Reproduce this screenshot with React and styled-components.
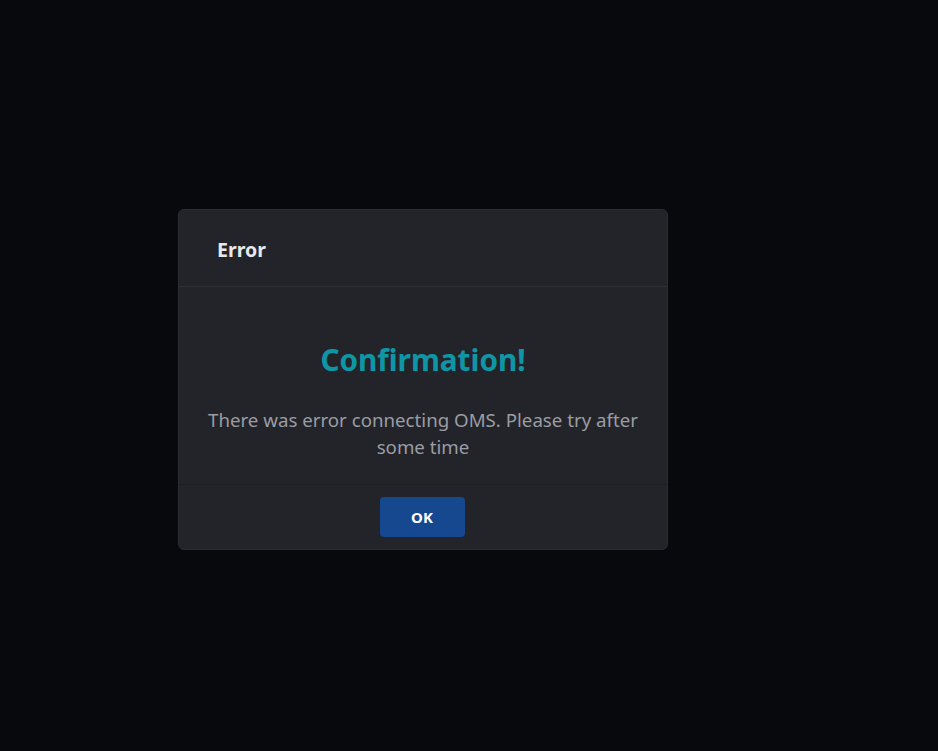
import React from "react";
import styled, { createGlobalStyle } from "styled-components";

const GlobalStyle = createGlobalStyle`
  html, body {
    margin: 0;
    padding: 0;
    background: #08090c;
  }
  body {
    font-family: "Noto Sans", "Open Sans", sans-serif;
  }
`;

const Page = styled.div`
  min-height: 751px;
  padding: 209px 0 0 178px;
  box-sizing: border-box;
`;

const Dialog = styled.div`
  width: 490px;
  background: #232429;
  border: 1px solid #2b2c31;
  border-radius: 6px;
  box-sizing: border-box;
  overflow: hidden;
`;

const Header = styled.div`
  height: 77px;
  display: flex;
  align-items: center;
  padding: 2px 38px 0;
  border-bottom: 1px solid #2e2f35;
  box-sizing: border-box;
`;

const HeaderTitle = styled.h5`
  margin: 0;
  font-size: 19.5px;
  font-weight: 700;
  color: #e8e8ea;
`;

const Body = styled.div`
  height: 198px;
  padding: 53px 20px 0;
  box-sizing: border-box;
  text-align: center;
  border-bottom: 1px solid #1c1d21;
`;

const Title = styled.h2`
  margin: 0 0 26px;
  font-size: 29.7px;
  line-height: 40px;
  font-weight: 700;
  color: #0f96a6;
`;

const Message = styled.p`
  margin: 0;
  font-size: 18.7px;
  line-height: 27px;
  color: #9a9da5;
`;

const Footer = styled.div`
  height: 64px;
  display: flex;
  align-items: center;
  justify-content: center;
`;

const Button = styled.button`
  width: 85px;
  height: 40px;
  margin-left: -2px;
  border: none;
  border-radius: 4px;
  background: #15488f;
  color: #ffffff;
  font-family: inherit;
  font-size: 15px;
  font-weight: 700;
  cursor: pointer;
`;

const App = () => {
  return (
    <>
      <GlobalStyle />
      <Page>
        <Dialog>
          <Header>
            <HeaderTitle>Error</HeaderTitle>
          </Header>
          <Body>
            <Title>Confirmation!</Title>
            <Message>
              There was error connecting OMS. Please try after some time
            </Message>
          </Body>
          <Footer>
            <Button>OK</Button>
          </Footer>
        </Dialog>
      </Page>
    </>
  );
};

export default App;
